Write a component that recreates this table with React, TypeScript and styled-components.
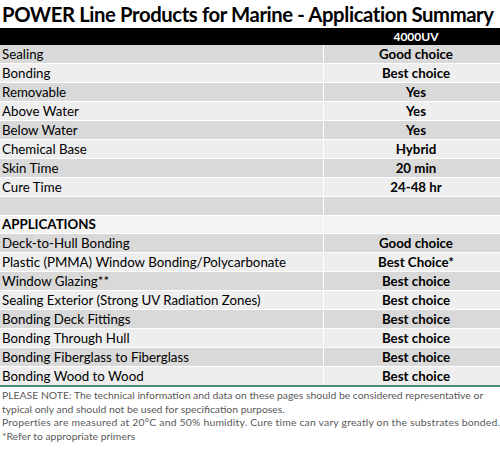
import React from 'react'
import styled, { createGlobalStyle } from 'styled-components'

const GlobalStyle = createGlobalStyle`
  html, body {
    margin: 0;
    padding: 0;
    background: #ffffff;
  }
  body {
    font-family: Lato, 'Open Sans', sans-serif;
    color: #000000;
    overflow: hidden;
  }
`

type Row = { label: string; value: string; heading?: boolean }

const properties: Row[] = [
  { label: 'Sealing', value: 'Good choice' },
  { label: 'Bonding', value: 'Best choice' },
  { label: 'Removable', value: 'Yes' },
  { label: 'Above Water', value: 'Yes' },
  { label: 'Below Water', value: 'Yes' },
  { label: 'Chemical Base', value: 'Hybrid' },
  { label: 'Skin Time', value: '20 min' },
  { label: 'Cure Time', value: '24-48 hr' },
  { label: '', value: '' },
  { label: 'APPLICATIONS', value: '', heading: true },
  { label: 'Deck-to-Hull Bonding', value: 'Good choice' },
  { label: 'Plastic (PMMA) Window Bonding/Polycarbonate', value: 'Best Choice*' },
  { label: 'Window Glazing**', value: 'Best choice' },
  { label: 'Sealing Exterior (Strong UV Radiation Zones)', value: 'Best choice' },
  { label: 'Bonding Deck Fittings', value: 'Best choice' },
  { label: 'Bonding Through Hull', value: 'Best choice' },
  { label: 'Bonding Fiberglass to Fiberglass', value: 'Best choice' },
  { label: 'Bonding Wood to Wood', value: 'Best choice' },
]

const notes = [
  'PLEASE NOTE: The technical information and data on these pages should be considered representative or',
  'typical only and should not be used for specification purposes.',
  'Properties are measured at 20°C and 50% humidity. Cure time can vary greatly on the substrates bonded.',
  '*Refer to appropriate primers',
]

export default function App() {
  return (
    <Page>
      <GlobalStyle />
      <Title>POWER Line Products for Marine - Application Summary</Title>
      <HeaderBar>
        <Cell />
        <HeadValue>4000UV</HeadValue>
      </HeaderBar>
      <Table>
        {properties.map((row, i) => (
          <TableRow key={i} $shade={row.heading ? 'white' : i % 2 === 0 ? 'dark' : 'light'}>
            <Label $heading={row.heading}>{row.label}</Label>
            <Value>{row.value}</Value>
          </TableRow>
        ))}
      </Table>
      <Notes>
        {notes.map((line) => (
          <NoteLine key={line}>{line}</NoteLine>
        ))}
      </Notes>
    </Page>
  )
}

const Page = styled.div`
  width: 500px;
  height: 451px;
  overflow: hidden;
`

const Title = styled.h1`
  margin: 0;
  height: 28px;
  padding-left: 2px;
  font-size: 20.3px;
  line-height: 28px;
  font-weight: 700;
  letter-spacing: -0.4px;
  white-space: nowrap;
`

const HeaderBar = styled.div`
  display: grid;
  grid-template-columns: 324px 1fr;
  height: 17px;
  background: #000000;
  color: #ffffff;
`

const Cell = styled.div``

const HeadValue = styled.div`
  padding-left: 8px;
  text-align: center;
  font-size: 12px;
  font-weight: 700;
  line-height: 17px;
`

const Table = styled.div`
  display: grid;
  grid-template-rows: repeat(18, 1fr);
  row-gap: 1px;
  height: 340px;
  background: #ffffff;
  border-bottom: 2px solid #4e8a78;
`

const shades = { dark: '#d9d9d9', light: '#eeeeee', white: '#f3f3f3' }

const TableRow = styled.div<{ $shade: 'dark' | 'light' | 'white' }>`
  display: grid;
  grid-template-columns: 323px 1fr;
  column-gap: 1px;
  & > div {
    background: ${(p) => shades[p.$shade]};
  }
`

const Label = styled.div<{ $heading?: boolean }>`
  display: flex;
  align-items: center;
  padding-left: 2px;
  font-size: 13.3px;
  font-weight: ${(p) => (p.$heading ? 700 : 400)};
  white-space: nowrap;
  overflow: hidden;
`

const Value = styled.div`
  display: flex;
  align-items: center;
  justify-content: center;
  padding-left: 8px;
  font-size: 13.3px;
  font-weight: 700;
  white-space: nowrap;
`

const Notes = styled.div`
  padding: 2px 2px 0 2px;
  color: #595959;
  font-size: 10.4px;
  line-height: 13.7px;
`

const NoteLine = styled.div`
  white-space: nowrap;
  &:nth-child(3) {
    letter-spacing: 0.2px;
  }
`
